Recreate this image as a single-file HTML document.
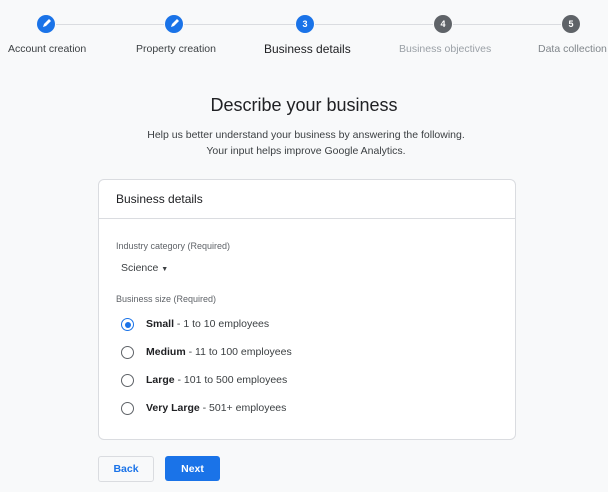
<!DOCTYPE html><html><head><style>
body{margin:0;width:608px;height:492px;background:#f8f9fa;font-family:"Liberation Sans",Arial,sans-serif;position:relative;overflow:hidden;color:#202124}
.a{position:absolute}
.c{position:absolute;width:18px;height:18px;border-radius:50%;top:15px;color:#fff;font-size:9px;font-weight:bold;text-align:center;line-height:18px}
.l{position:absolute;top:24px;height:1px;background:#dadce0}
.t{position:absolute;top:43px;font-size:10.5px;white-space:nowrap}
.r{position:absolute;left:121px;width:11px;height:11px;border:1.6px solid #5f6368;border-radius:50%}
.o{position:absolute;left:146px;font-size:10.5px;color:#3c4043}
.o b{color:#202124}
</style></head><body>
<div class="l" style="left:56px;width:108px"></div>
<div class="l" style="left:184px;width:111px"></div>
<div class="l" style="left:315px;width:118px"></div>
<div class="l" style="left:453px;width:108px"></div>
<div class="c" style="left:37px;background:#1a73e8"><svg width="18" height="18" viewBox="0 0 18 18"><path d="M6 12l1-3 5-5 2 2-5 5z" fill="#fff"/></svg></div>
<div class="c" style="left:165px;background:#1a73e8"><svg width="18" height="18" viewBox="0 0 18 18"><path d="M6 12l1-3 5-5 2 2-5 5z" fill="#fff"/></svg></div>
<div class="c" style="left:296px;background:#1a73e8">3</div>
<div class="c" style="left:434px;background:#5f6368">4</div>
<div class="c" style="left:562px;background:#5f6368">5</div>
<div class="t" style="left:8px;color:#3c4043">Account creation</div>
<div class="t" style="left:136px;color:#3c4043">Property creation</div>
<div class="t" style="left:264px;font-size:12px;top:42px">Business details</div>
<div class="t" style="left:399px;color:#9aa0a6">Business objectives</div>
<div class="t" style="left:538px;color:#80868b">Data collection</div>
<div class="a" style="left:0;width:608px;top:95px;text-align:center;font-size:18px">Describe your business</div>
<div class="a" style="left:0;width:612px;top:127px;text-align:center;font-size:10.5px;line-height:16px;color:#3c4043">Help us better understand your business by answering the following.<br>Your input helps improve Google Analytics.</div>
<div class="a" style="left:98px;top:179px;width:416px;height:259px;background:#fff;border:1px solid #dadce0;border-radius:6px">
<div style="height:38px;border-bottom:1px solid #dadce0;font-size:12px;line-height:38px;padding-left:17px">Business details</div></div>
<div class="a" style="left:116px;top:241px;font-size:9px;color:#5f6368">Industry category (Required)</div>
<div class="a" style="left:121px;top:262px;font-size:10.5px;color:#3c4043">Science <span style="font-size:7px">▼</span></div>
<div class="a" style="left:116px;top:294px;font-size:9px;color:#5f6368">Business size (Required)</div>
<div class="r" style="top:318px;border-color:#1a73e8"><div style="margin:2.5px;width:6px;height:6px;border-radius:50%;background:#1a73e8"></div></div>
<div class="o" style="top:318px"><b>Small</b> - 1 to 10 employees</div>
<div class="r" style="top:346px"></div><div class="o" style="top:346px"><b>Medium</b> - 11 to 100 employees</div>
<div class="r" style="top:374px"></div><div class="o" style="top:374px"><b>Large</b> - 101 to 500 employees</div>
<div class="r" style="top:402px"></div><div class="o" style="top:402px"><b>Very Large</b> - 501+ employees</div>
<div class="a" style="left:98px;top:456px;width:54px;height:24px;border:1px solid #dadce0;border-radius:3px;background:#f8f9fa;color:#1a73e8;font-size:10.5px;font-weight:bold;text-align:center;line-height:25px">Back</div>
<div class="a" style="left:165px;top:456px;width:55px;height:25px;border-radius:3px;background:#1a73e8;color:#fff;font-size:10.5px;font-weight:bold;text-align:center;line-height:26px">Next</div>
</body></html>
